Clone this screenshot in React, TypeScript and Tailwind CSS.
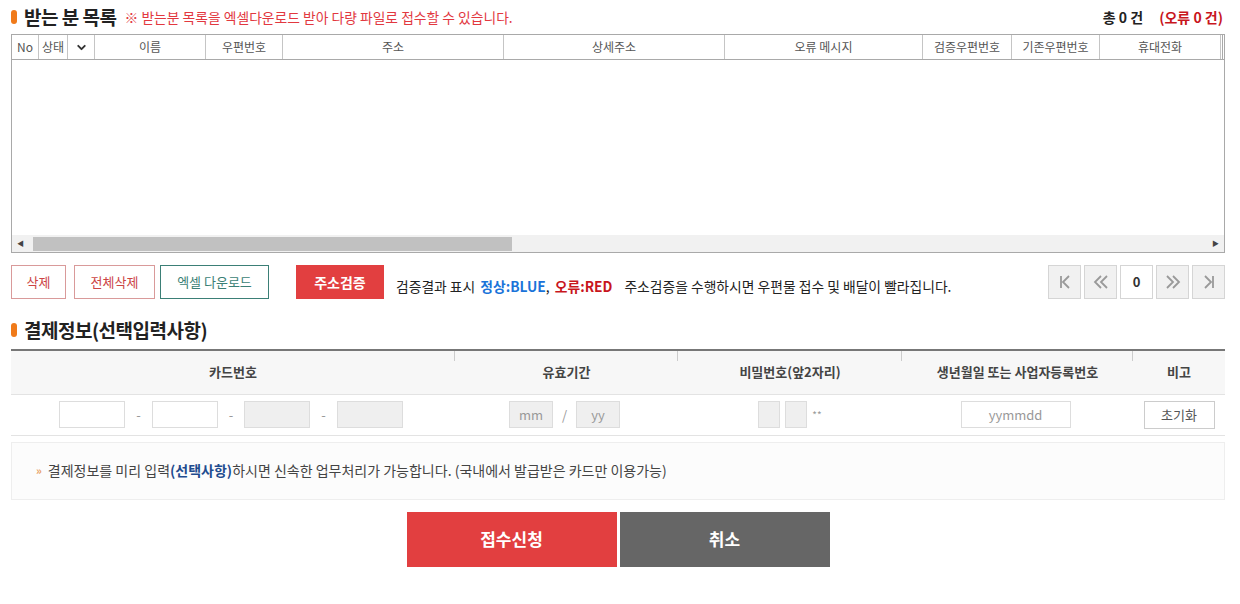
import { ChevronDown } from "lucide-react"

const font = { fontFamily: '"Noto Sans CJK KR", "Noto Sans", sans-serif' }

const gridCols = [
  { label: "No", w: "w-[27px]" },
  { label: "상태", w: "w-[29px]" },
  { label: "check", w: "w-[27px]" },
  { label: "이름", w: "w-[111px]" },
  { label: "우편번호", w: "w-[77px]" },
  { label: "주소", w: "w-[221px]" },
  { label: "상세주소", w: "w-[221px]" },
  { label: "오류 메시지", w: "w-[198px]" },
  { label: "검증우편번호", w: "w-[89px]" },
  { label: "기존우편번호", w: "w-[88px]" },
  { label: "휴대전화", w: "w-[121px]" },
]

function SectionTitle({ children }: { children: React.ReactNode }) {
  return (
    <div className="flex items-center gap-[7px]">
      <span className="h-[14px] w-[6px] rounded-full bg-[#f07a1a]" />
      <span className="text-[19px] font-bold tracking-[-0.5px] text-[#222]">{children}</span>
    </div>
  )
}

function PageBtn({ children, white }: { children: React.ReactNode; white?: boolean }) {
  return (
    <div
      className={`flex h-[34px] w-[33px] items-center justify-center border border-[#d5d5d5] text-[13px] ${
        white ? "bg-white font-bold text-[#333]" : "bg-[#f1f1f1] text-[#999]"
      }`}
    >
      {children}
    </div>
  )
}

export default function App() {
  return (
    <div className="h-[604px] w-[1240px] bg-white text-[#333]" style={font}>
      <div className="pl-[11px] pr-[15px] pt-[4px]">
        {/* header */}
        <div className="flex h-[26px] items-center justify-between">
          <div className="flex items-center gap-[8px]">
            <SectionTitle>받는 분 목록</SectionTitle>
            <span className="text-[13.8px] text-[#e2383f]">※ 받는분 목록을 엑셀다운로드 받아 다량 파일로 접수할 수 있습니다.</span>
          </div>
          <div className="flex items-center gap-[16px] pr-[2px] text-[14px] font-bold">
            <span className="text-[#222]">총 0 건</span>
            <span className="text-[#c8161d]">(오류 0 건)</span>
          </div>
        </div>

        {/* grid */}
        <div className="mt-[4px] flex h-[219px] flex-col border border-[#a9a9a9]">
          <div className="flex h-[25px] border-b border-[#a9a9a9] text-[12px] text-[#555]">
            {gridCols.map((c) => (
              <div key={c.label} className={`${c.w} flex shrink-0 items-center justify-center border-r border-[#c5c5c5]`}>
                {c.label === "check" ? <ChevronDown size={13} strokeWidth={3.5} className="text-[#333]" /> : c.label}
              </div>
            ))}
            <div className="w-[2px] shrink-0 border-r border-[#a9a9a9]" />
          </div>
          <div className="flex-1" />
          <div className="flex h-[17px] items-center bg-[#f1f1f1] px-[5px]">
            <span className="text-[7px] text-[#444]">◀</span>
            <div className="ml-[9px] h-[14px] w-[479px] bg-[#c1c1c1]" />
            <div className="flex-1" />
            <span className="text-[7px] text-[#444]">▶</span>
          </div>
        </div>

        {/* action row */}
        <div className="mt-[12px] flex h-[34px] items-center">
          <div className="flex h-full w-[55px] items-center justify-center border border-[#d99a9a] text-[13px] text-[#c44]">삭제</div>
          <div className="ml-[8px] flex h-full w-[81px] items-center justify-center border border-[#d99a9a] text-[13px] text-[#c44]">전체삭제</div>
          <div className="ml-[5px] flex h-full w-[109px] items-center justify-center border border-[#3b7f76] text-[13px] text-[#3b7f76]">엑셀 다운로드</div>
          <div className="ml-[27px] flex h-full w-[88px] items-center justify-center bg-[#e23f40] text-[14px] font-bold text-white">주소검증</div>
          <div className="ml-[12px] mt-[8px] text-[13.8px] text-[#222]">
            검증결과 표시 <span className="ml-[2px] font-bold text-[#1a73d9]">정상:BLUE</span>,{" "}
            <span className="ml-[2px] font-bold text-[#c8161d]">오류:RED</span>
            <span className="ml-[12px]">주소검증을 수행하시면 우편물 접수 및 배달이 빨라집니다.</span>
          </div>
          <div className="ml-auto flex gap-[3px]">
            <PageBtn>
              <svg width="12" height="14" viewBox="0 0 12 14" fill="none" stroke="#999" strokeWidth="1.8">
                <path d="M2 1v12M10 1L4 7l6 6" />
              </svg>
            </PageBtn>
            <PageBtn>
              <svg width="16" height="14" viewBox="0 0 16 14" fill="none" stroke="#999" strokeWidth="1.8">
                <path d="M8 1L2 7l6 6M14 1L8 7l6 6" />
              </svg>
            </PageBtn>
            <PageBtn white>0</PageBtn>
            <PageBtn>
              <svg width="16" height="14" viewBox="0 0 16 14" fill="none" stroke="#999" strokeWidth="1.8">
                <path d="M2 1l6 6-6 6M8 1l6 6-6 6" />
              </svg>
            </PageBtn>
            <PageBtn>
              <svg width="12" height="14" viewBox="0 0 12 14" fill="none" stroke="#999" strokeWidth="1.8">
                <path d="M2 1l6 6-6 6M10 1v12" />
              </svg>
            </PageBtn>
          </div>
        </div>

        {/* payment */}
        <div className="mt-[17px]">
          <SectionTitle>결제정보(선택입력사항)</SectionTitle>
        </div>
        <div className="mt-[4px] border-t-2 border-[#777]">
          <div className="flex h-[44px] border-b border-[#e3e3e3] bg-[#f7f7f7] text-[13px] font-bold text-[#444]">
            <div className="relative flex w-[444px] items-center justify-center">카드번호<span className="absolute right-0 top-0 h-[10px] border-r border-[#ccc]" /></div>
            <div className="relative flex w-[223px] items-center justify-center">유효기간<span className="absolute right-0 top-0 h-[10px] border-r border-[#ccc]" /></div>
            <div className="relative flex w-[224px] items-center justify-center">비밀번호(앞2자리)<span className="absolute right-0 top-0 h-[10px] border-r border-[#ccc]" /></div>
            <div className="relative flex w-[231px] items-center justify-center">생년월일 또는 사업자등록번호<span className="absolute right-0 top-0 h-[10px] border-r border-[#ccc]" /></div>
            <div className="flex flex-1 items-center justify-center">비고</div>
          </div>
          <div className="flex h-[41px] items-center border-b border-[#e3e3e3] text-[13px] text-[#999]">
            <div className="flex w-[444px] items-center justify-center gap-[11px] pr-[4px]">
              <div className="h-[27px] w-[66px] border border-[#ddd] bg-white" />
              <span>-</span>
              <div className="h-[27px] w-[66px] border border-[#ddd] bg-white" />
              <span>-</span>
              <div className="h-[27px] w-[66px] border border-[#ddd] bg-[#efefef]" />
              <span>-</span>
              <div className="h-[27px] w-[66px] border border-[#ddd] bg-[#efefef]" />
            </div>
            <div className="flex w-[223px] items-center justify-center gap-[9px] pr-[4px]">
              <div className="flex h-[27px] w-[44px] items-center justify-center border border-[#ddd] bg-[#efefef]">mm</div>
              <span>/</span>
              <div className="flex h-[27px] w-[44px] items-center justify-center border border-[#ddd] bg-[#efefef]">yy</div>
            </div>
            <div className="flex w-[224px] items-center justify-center gap-[5px]">
              <div className="h-[27px] w-[22px] border border-[#ddd] bg-[#efefef]" />
              <div className="h-[27px] w-[22px] border border-[#ddd] bg-[#efefef]" />
              <span className="text-[10px]">**</span>
            </div>
            <div className="flex w-[231px] items-center justify-center pr-[4px]">
              <div className="flex h-[27px] w-[110px] items-center justify-center border border-[#ddd] bg-white">yymmdd</div>
            </div>
            <div className="flex flex-1 items-center justify-center">
              <div className="flex h-[28px] w-[71px] items-center justify-center border border-[#ccc] bg-white text-[#555]">초기화</div>
            </div>
          </div>
        </div>

        <div className="mt-[6px] flex h-[58px] items-center border border-[#eee] bg-[#fcfcfc] pl-[24px] text-[14px] text-[#444]">
          <span className="mr-[6px] text-[11px] font-bold text-[#e8a062]">»</span>
          결제정보를 미리 입력<span className="font-bold text-[#1f4c8f]">(선택사항)</span>하시면 신속한 업무처리가 가능합니다. (국내에서 발급받은 카드만 이용가능)
        </div>

        <div className="mt-[12px] flex justify-center gap-[3px]">
          <div className="flex h-[55px] w-[210px] items-center justify-center bg-[#e23f40] text-[17px] font-bold text-white">접수신청</div>
          <div className="flex h-[55px] w-[210px] items-center justify-center bg-[#666] text-[17px] font-bold text-white">취소</div>
        </div>
      </div>
    </div>
  )
}
